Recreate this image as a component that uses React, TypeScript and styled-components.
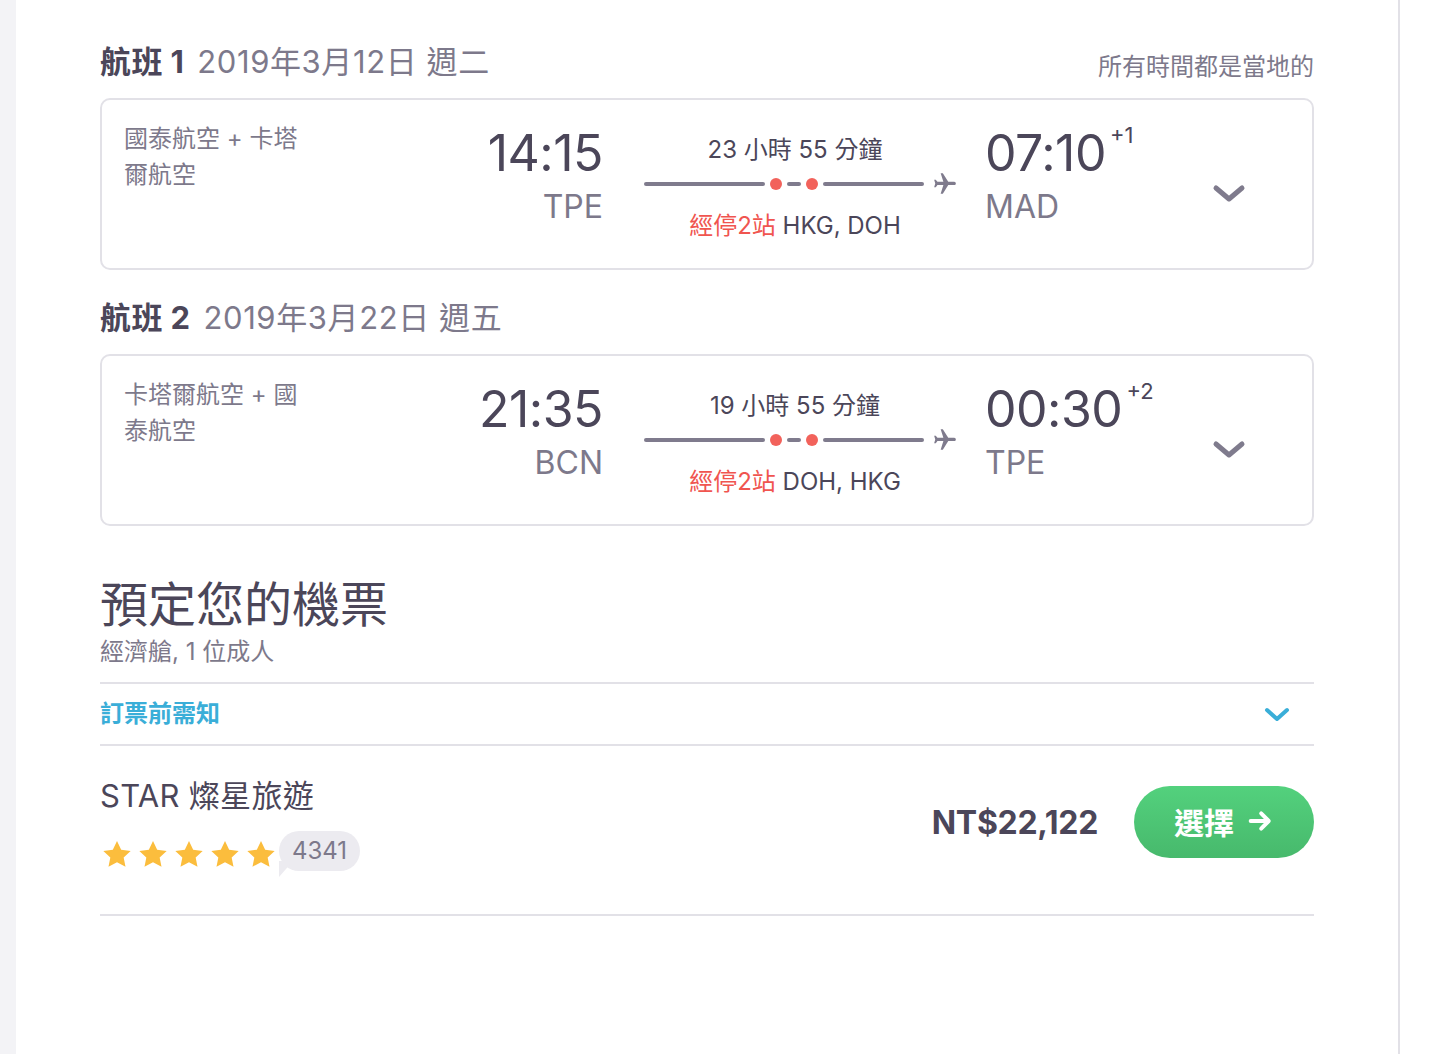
import React from "react";
import styled, { createGlobalStyle } from "styled-components";

const GlobalStyle = createGlobalStyle`
  html, body { margin: 0; padding: 0; background: #ffffff; }
  body {
    font-family: "Inter", "Noto Sans CJK TC", sans-serif;
    color: #4b4659;
    -webkit-font-smoothing: antialiased;
  }
  * { box-sizing: border-box; }
`;

const DARK = "#4b4659";
const GRAY = "#7d798b";
const LINE = "#e2e1e7";

const Page = styled.div`
  display: flex;
  min-height: 1054px;
`;

const SideStrip = styled.div`
  width: 16px;
  flex: none;
  background: #f3f3f6;
`;

const Panel = styled.main`
  width: 1384px;
  flex: none;
  background: #fff;
  border-right: 2px solid ${LINE};
  padding: 44px 84px 0 84px;
`;

const SectionHead = styled.div<{ $top?: number }>`
  display: flex;
  justify-content: space-between;
  align-items: flex-end;
  margin-top: ${(p) => p.$top ?? 0}px;
  margin-bottom: 18px;
`;

const HeadTitle = styled.h2`
  margin: 0;
  font-size: 31px;
  line-height: 36px;
  font-weight: 400;
  color: ${GRAY};
  letter-spacing: 0.6px;
`;

const HeadStrong = styled.strong`
  font-weight: 700;
  color: ${DARK};
  margin-right: 13px;
  letter-spacing: 0.4px;
`;

const LocalNote = styled.span`
  font-size: 24px;
  line-height: 26px;
  color: ${GRAY};
`;

const Card = styled.section`
  height: 172px;
  border: 2px solid ${LINE};
  border-radius: 10px;
  display: flex;
  align-items: flex-start;
  padding: 21px 0 0 22px;
`;

const Airline = styled.div`
  width: 180px;
  flex: none;
  font-size: 24px;
  line-height: 36px;
  color: ${GRAY};
`;

const Endpoint = styled.div<{ $align: "left" | "right"; $width: number }>`
  width: ${(p) => p.$width}px;
  flex: none;
  padding-top: 3px;
  display: flex;
  flex-direction: column;
  align-items: ${(p) => (p.$align === "right" ? "flex-end" : "flex-start")};
`;

const TimeRow = styled.div`
  display: flex;
  align-items: flex-start;
`;

const Time = styled.div`
  font-size: 50px;
  line-height: 58px;
  font-weight: 400;
  color: ${DARK};
  letter-spacing: -0.5px;
`;

const DayShift = styled.sup`
  font-size: 22px;
  line-height: 22px;
  color: ${DARK};
  margin-left: 4px;
  margin-top: 0;
  vertical-align: baseline;
  position: static;
`;

const Airport = styled.div`
  font-size: 32px;
  line-height: 40px;
  margin-top: 5px;
  color: ${GRAY};
`;

const Route = styled.div`
  width: 312px;
  flex: none;
  margin: 0 29px 0 41px;
  padding-top: 14px;
  display: flex;
  flex-direction: column;
`;

const Duration = styled.div`
  font-size: 24px;
  line-height: 30px;
  text-align: center;
  padding-right: 10px;
  color: ${DARK};
`;

const Track = styled.div`
  display: flex;
  align-items: center;
  height: 24px;
  margin-top: 7px;
`;

const Segment = styled.div<{ $w: number }>`
  width: ${(p) => p.$w}px;
  height: 4px;
  border-radius: 2px;
  background: #7f7b8d;
  flex: none;
`;

const StopDot = styled.div`
  width: 12px;
  height: 12px;
  border-radius: 50%;
  background: #f2625b;
  flex: none;
  margin: 0 5px;
`;

const PlaneIcon = styled.svg`
  width: 26px;
  height: 26px;
  flex: none;
  margin-left: 8px;
`;

const Stops = styled.div`
  font-size: 24px;
  line-height: 30px;
  text-align: center;
  padding-right: 10px;
  margin-top: 15px;
  color: ${DARK};
`;

const StopCount = styled.span`
  color: #f0554f;
`;

const Chevron = styled.svg<{ $top: number }>`
  flex: none;
  margin-top: ${(p) => p.$top}px;
`;

const ExpandSlot = styled.div`
  flex: 1;
  display: flex;
  justify-content: flex-end;
  padding-right: 66px;
`;

const BookTitle = styled.h1`
  margin: 51px 0 0;
  font-size: 48px;
  line-height: 56px;
  font-weight: 400;
  color: ${DARK};
`;

const BookSub = styled.div`
  font-size: 24px;
  line-height: 30px;
  margin-top: 4px;
  color: ${GRAY};
`;

const NoticeRow = styled.div`
  margin-top: 15px;
  height: 64px;
  border-top: 2px solid ${LINE};
  border-bottom: 2px solid ${LINE};
  display: flex;
  align-items: center;
  justify-content: space-between;
  padding: 0 24px 6px 0;
`;

const NoticeText = styled.span`
  font-size: 24px;
  font-weight: 700;
  color: #3aaed8;
`;

const NoticeChevron = styled.svg`
  margin-top: 8px;
`;

const AgencyRow = styled.div`
  height: 170px;
  border-bottom: 2px solid ${LINE};
  display: flex;
  justify-content: space-between;
  align-items: flex-start;
`;

const AgencyInfo = styled.div`
  padding-top: 30px;
  display: flex;
  flex-direction: column;
`;

const AgencyName = styled.div`
  font-size: 31px;
  line-height: 40px;
  letter-spacing: 0.3px;
  color: ${DARK};
`;

const RatingRow = styled.div`
  display: flex;
  align-items: center;
  margin-top: 14px;
`;

const Stars = styled.div`
  display: flex;
  gap: 2px;
  margin-top: 8px;
`;

const ReviewBubble = styled.span`
  position: relative;
  margin-left: 1px;
  height: 40px;
  padding: 0 13px;
  border-radius: 20px;
  background: #ecebf0;
  font-size: 24px;
  line-height: 40px;
  color: ${GRAY};
  &::after {
    content: "";
    position: absolute;
    left: 0;
    bottom: -6px;
    width: 14px;
    height: 16px;
    background: #ecebf0;
    clip-path: polygon(0 0, 100% 0, 0 100%);
  }
`;

const Offer = styled.div`
  padding-top: 40px;
  display: flex;
  align-items: center;
  gap: 36px;
`;

const Price = styled.div`
  font-size: 32px;
  font-weight: 700;
  color: ${DARK};
  letter-spacing: -0.3px;
`;

const SelectButton = styled.button`
  width: 180px;
  height: 72px;
  border: none;
  border-radius: 36px;
  background: linear-gradient(180deg, #53d17d 0%, #47b96c 100%);
  color: #fff;
  font-family: inherit;
  font-size: 30px;
  font-weight: 700;
  display: flex;
  align-items: center;
  justify-content: center;
  gap: 12px;
  padding: 0 0 2px 0;
  cursor: pointer;
`;

const Plane = () => (
  <PlaneIcon viewBox="0 0 24 24">
    <path
      transform="rotate(90 12 12)"
      fill="#7f7b8d"
      d="M21 16v-2l-8-5V3.5c0-.83-.67-1.5-1.5-1.5S10 2.67 10 3.5V9l-8 5v2l8-2.5V19l-2 1.5V22l3.5-1 3.5 1v-1.5L13 19v-5.5l8 2.5z"
    />
  </PlaneIcon>
);

const Star = () => (
  <svg width="34" height="34" viewBox="0 0 24 24">
    <path
      fill="#fbbd3d"
      d="M12 2.2l2.95 6.1 6.7.8-4.95 4.6 1.3 6.6L12 17.05 5.99 20.3l1.3-6.6L2.35 9.1l6.7-.8z"
    />
  </svg>
);

type Flight = {
  idx: number;
  date: string;
  airline: string;
  depTime: string;
  depCode: string;
  arrTime: string;
  arrCode: string;
  shift: string;
  duration: string;
  via: string;
};

const flights: Flight[] = [
  {
    idx: 1,
    date: "2019年3月12日 週二",
    airline: "國泰航空 + 卡塔爾航空",
    depTime: "14:15",
    depCode: "TPE",
    arrTime: "07:10",
    arrCode: "MAD",
    shift: "+1",
    duration: "23 小時 55 分鐘",
    via: "HKG, DOH",
  },
  {
    idx: 2,
    date: "2019年3月22日 週五",
    airline: "卡塔爾航空 + 國泰航空",
    depTime: "21:35",
    depCode: "BCN",
    arrTime: "00:30",
    arrCode: "TPE",
    shift: "+2",
    duration: "19 小時 55 分鐘",
    via: "DOH, HKG",
  },
];

const FlightCard = ({ f }: { f: Flight }) => (
  <Card>
    <Airline>{f.airline}</Airline>
    <Endpoint $align="right" $width={299}>
      <Time>{f.depTime}</Time>
      <Airport>{f.depCode}</Airport>
    </Endpoint>
    <Route>
      <Duration>{f.duration}</Duration>
      <Track>
        <Segment $w={121} />
        <StopDot />
        <Segment $w={14} />
        <StopDot />
        <Segment $w={101} />
        <Plane />
      </Track>
      <Stops>
        <StopCount>經停2站</StopCount> {f.via}
      </Stops>
    </Route>
    <Endpoint $align="left" $width={200}>
      <TimeRow>
        <Time>{f.arrTime}</Time>
        <DayShift>{f.shift}</DayShift>
      </TimeRow>
      <Airport>{f.arrCode}</Airport>
    </Endpoint>
    <ExpandSlot>
      <Chevron $top={62} width="34" height="22" viewBox="0 0 34 22">
        <polyline
          points="4,5 17,16 30,5"
          fill="none"
          stroke="#7f7b8d"
          strokeWidth="5"
          strokeLinecap="round"
          strokeLinejoin="round"
        />
      </Chevron>
    </ExpandSlot>
  </Card>
);

export default function App() {
  return (
    <>
      <GlobalStyle />
      <Page>
        <SideStrip />
        <Panel>
          {flights.map((f, i) => (
            <React.Fragment key={f.idx}>
              <SectionHead $top={i === 0 ? 0 : 30}>
                <HeadTitle>
                  <HeadStrong>航班 {f.idx}</HeadStrong>
                  {f.date}
                </HeadTitle>
                {i === 0 && <LocalNote>所有時間都是當地的</LocalNote>}
              </SectionHead>
              <FlightCard f={f} />
            </React.Fragment>
          ))}

          <BookTitle>預定您的機票</BookTitle>
          <BookSub>經濟艙, 1 位成人</BookSub>

          <NoticeRow>
            <NoticeText>訂票前需知</NoticeText>
            <NoticeChevron width="26" height="16" viewBox="0 0 26 16">
              <polyline
                points="3,3 13,12 23,3"
                fill="none"
                stroke="#3aaed8"
                strokeWidth="4"
                strokeLinecap="round"
                strokeLinejoin="round"
              />
            </NoticeChevron>
          </NoticeRow>

          <AgencyRow>
            <AgencyInfo>
              <AgencyName>STAR 燦星旅遊</AgencyName>
              <RatingRow>
                <Stars>
                  <Star />
                  <Star />
                  <Star />
                  <Star />
                  <Star />
                </Stars>
                <ReviewBubble>4341</ReviewBubble>
              </RatingRow>
            </AgencyInfo>
            <Offer>
              <Price>NT$22,122</Price>
              <SelectButton>
                選擇
                <svg width="28" height="28" viewBox="0 0 24 24">
                  <path
                    d="M4 12h15M13 5.5l6.5 6.5-6.5 6.5"
                    fill="none"
                    stroke="#fff"
                    strokeWidth="3.4"
                    strokeLinecap="round"
                    strokeLinejoin="round"
                  />
                </svg>
              </SelectButton>
            </Offer>
          </AgencyRow>
        </Panel>
      </Page>
    </>
  );
}
